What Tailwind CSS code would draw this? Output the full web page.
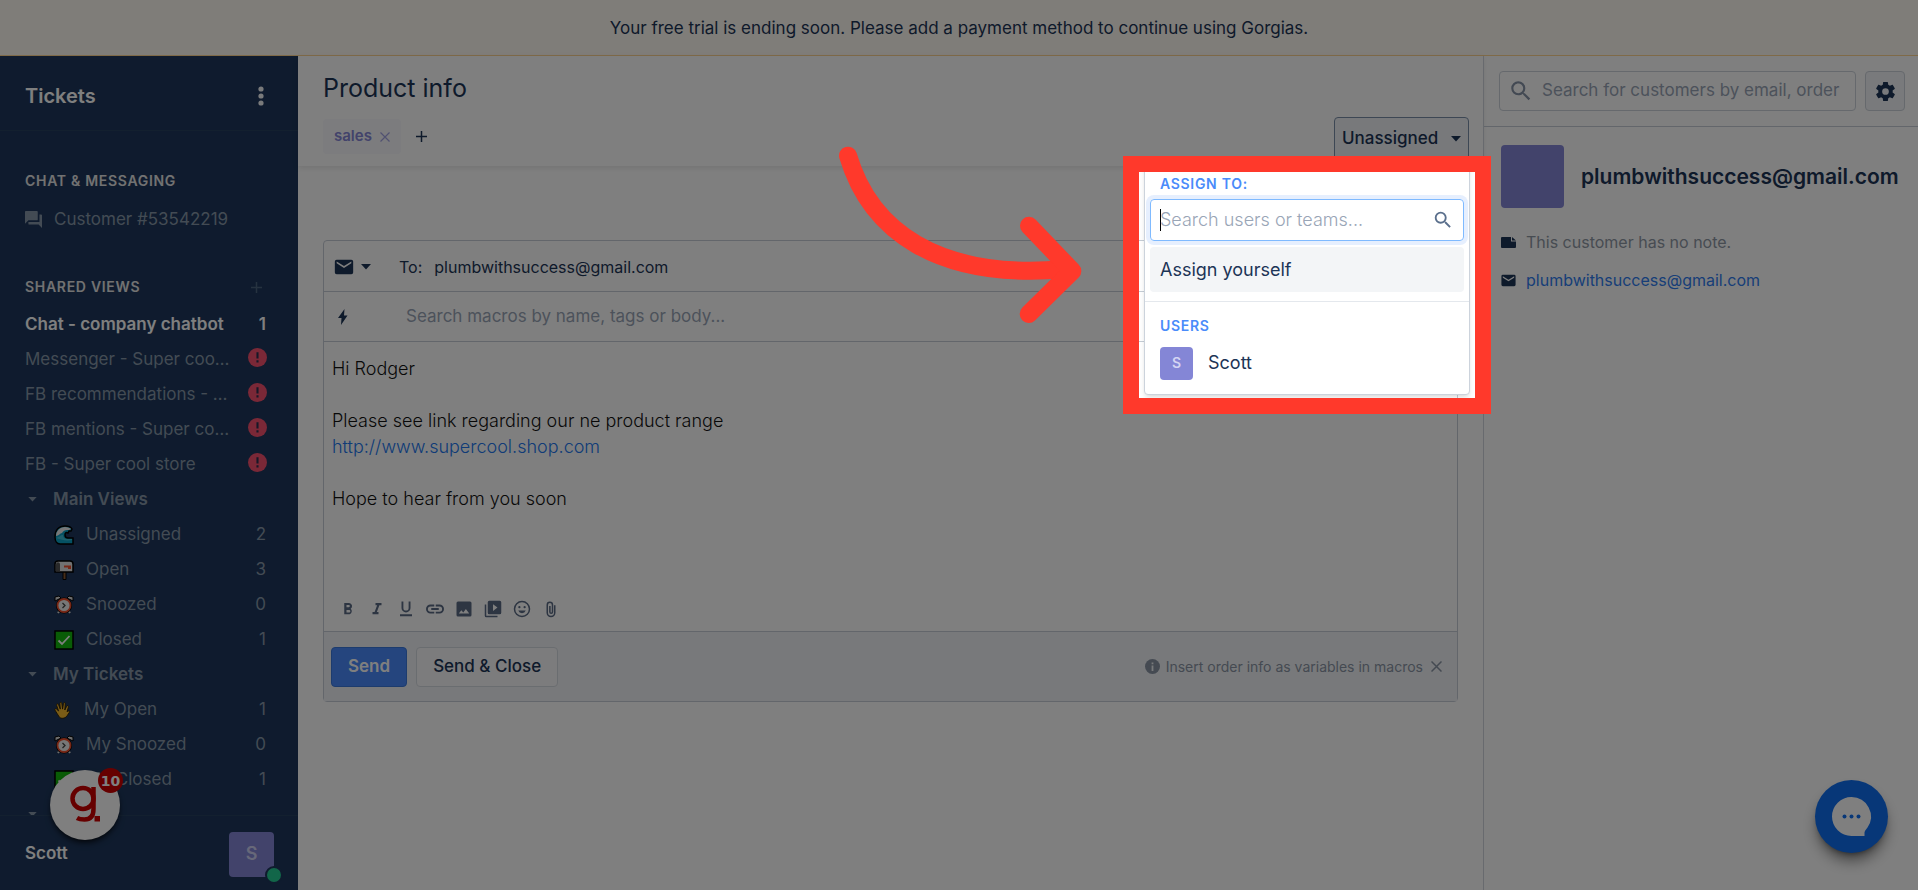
<!DOCTYPE html>
<html lang="en">
<head>
<meta charset="utf-8">
<title>Product info - Tickets</title>
<script src="https://cdn.jsdelivr.net/npm/@tailwindcss/browser@4"></script>
</head>
<body class="bg-white">
<svg class="hidden">
  <symbol id="mail" viewBox="0 0 24 24"><path d="M20 4H4a2 2 0 0 0-2 2v12a2 2 0 0 0 2 2h16a2 2 0 0 0 2-2V6a2 2 0 0 0-2-2zm0 4-8 5-8-5V6l8 5 8-5z"/></symbol>
  <symbol id="search" viewBox="0 0 24 24"><path d="M15.5 14h-.79l-.28-.27A6.47 6.47 0 0 0 16 9.5 6.5 6.5 0 1 0 9.5 16c1.61 0 3.09-.59 4.23-1.57l.27.28v.79l5 4.99L20.49 19zm-6 0C7.01 14 5 11.99 5 9.5S7.01 5 9.5 5 14 7.01 14 9.5 11.99 14 9.5 14z"/></symbol>
  <symbol id="caret" viewBox="0 0 10 6"><path d="M0 0h10L5 5.5z"/></symbol>
  <symbol id="alert" viewBox="0 0 20 20"><circle cx="10" cy="10" r="10" fill="#f4506e"/><path d="M8.9 4.5h2.2v6.500H8.900zM8.900 13h2.200v2.200H8.900z" fill="#2b3050"/></symbol>
  <symbol id="wave" viewBox="0 0 20 20"><path d="M1 12C1 5 5 1 11 1c3 0 6 1 7 3l-1 2-2 0-1 2c-2-1-3 0-3 2s1 3 3 3h5v6H6c-3 0-5-3-5-7z" fill="#0aa3c7" stroke="#000" stroke-width="1.5"/><path d="M2 11C2 6 6 2 11 2c3 0 5 1 6 2l-2 1-2 0c-2 0-4 1-5 3-2 0-3 3-6 3z" fill="#eee"/><path d="M2 13c4-1 4-3 7-3 0 2 1 4 4 4h5v1c-6 1-10 0-16-2z" fill="#3dc0d8"/></symbol>
  <symbol id="mailbox" viewBox="0 0 20 20"><path d="M9 11h3v8.500H9z" fill="#8d5a32" stroke="#000"/><path d="M4 1h12c2 0 3 1 3 3v8H1V4c0-2 1-3 3-3z" fill="#e4e4e4" stroke="#000" stroke-width="1.500"/><path d="M2 11.500V4.500c0-3 4-3 4 0v7z" fill="#555"/><path d="M10 5.500h7v3.500h-3V7.500h-4z" fill="#f0502e"/></symbol>
  <symbol id="clock" viewBox="0 0 20 20"><path d="M4 18l2-3M16 18l-2-3" stroke="#ddd" stroke-width="2"/><path d="M1 6V2l4-1 2 2zM19 6V2l-4-1-2 2z" fill="#ddd" stroke="#000"/><circle cx="10" cy="10.500" r="8" fill="#000"/><circle cx="10" cy="10.500" r="6.500" fill="#eee" stroke="#f0502e" stroke-width="1.800"/><path d="M8.500 8l2.500 2.500-2.500 2.500" fill="none" stroke="#444" stroke-width="1.300"/></symbol>
  <symbol id="check" viewBox="0 0 20 20"><path d="M1 1h18v18H1z" fill="#13b80c" stroke="#000" stroke-width="1.500"/><path d="M4.500 10.500 8 14l7.500-8" fill="none" stroke="#fff" stroke-width="1.800"/></symbol>
  <symbol id="hand" viewBox="0 0 20 20"><path d="M6 18C4 15 3 13 1 10c-.5-1.500 1-2 2-1l2 2L3 5c-.5-2 1.500-2.500 2-1l2 5-.5-6c0-2 2-2 2.300 0L9.500 9l1-6c.5-2 2.300-1.500 2 .3L12 10l2-4c.8-1.500 2.500-.8 2 .8L14.500 12c1-1 3-1.500 3 0l-3 4.500C12.500 19.500 8 20 6 18z" fill="#f4b82e" stroke="#2b1d00"/></symbol>
</svg>

<div class="flex h-screen flex-col overflow-hidden font-['Inter',sans-serif] text-[#1c3456]">
  <header class="flex h-14 shrink-0 items-center justify-center border-b border-[#ffd591] bg-[#fffaf2] pt-0.5 text-[17px]">Your free trial is ending soon. Please add a payment method to continue using Gorgias.</header>

  <div class="flex min-h-0 flex-1">
    <aside class="relative flex w-[298px] shrink-0 flex-col bg-[#1e375c]">
      <div class="flex h-[75px] shrink-0 items-center justify-between border-b border-[#26405f] pt-[6px] pr-[34px] pl-[25px]">
        <h1 class="text-xl font-semibold text-white">Tickets</h1>
        <button aria-label="More"><svg class="h-5 w-[6px]" viewBox="0 0 6 20" fill="#f2f4f6"><circle cx="3" cy="3" r="2.600"/><circle cx="3" cy="10" r="2.600"/><circle cx="3" cy="17" r="2.600"/></svg></button>
      </div>
      <nav class="min-h-0 flex-1 overflow-hidden pr-8 pl-[25px] text-[17px] text-[#8797a8]">
        <h2 class="mt-[35px] flex h-[30px] items-center text-sm font-semibold tracking-wider text-[#e4e4e4]">CHAT &amp; MESSAGING</h2>
        <a href="#" class="mt-[6px] flex h-[35px] items-center gap-3"><svg class="size-[17px]" viewBox="2 2 20 20" fill="currentColor"><path d="M21 6h-2v9H6v2a1 1 0 0 0 1 1h11l4 4V7a1 1 0 0 0-1-1zm-4 6V3a1 1 0 0 0-1-1H3a1 1 0 0 0-1 1v14l4-4h10a1 1 0 0 0 1-1z"/></svg>Customer #53542219</a>
        <div class="mt-[35px] flex h-[30px] items-center justify-between pr-1"><h2 class="text-sm font-semibold tracking-wider text-[#e4e4e4]">SHARED VIEWS</h2><button aria-label="Add view"><svg class="size-[11px]" viewBox="0 0 11 11"><path d="M5.500 0v11M0 5.500h11" stroke="#4d6480" stroke-width="1.500"/></svg></button></div>
        <a href="#" class="mt-[5px] flex h-[35px] items-center justify-between font-semibold text-white"><span>Chat - company chatbot</span><span>1</span></a>
        <a href="#" class="flex h-[35px] items-center justify-between"><span class="w-[206px] truncate">Messenger - Super cool store</span><svg class="-mr-px mb-1 size-[19px]"><use href="#alert"/></svg></a>
        <a href="#" class="flex h-[35px] items-center justify-between"><span class="w-[206px] truncate">FB recommendations - Super cool store</span><svg class="-mr-px mb-1 size-[19px]"><use href="#alert"/></svg></a>
        <a href="#" class="flex h-[35px] items-center justify-between"><span class="w-[206px] truncate">FB mentions - Super cool store</span><svg class="-mr-px mb-1 size-[19px]"><use href="#alert"/></svg></a>
        <a href="#" class="flex h-[35px] items-center justify-between"><span class="w-[206px] truncate">FB - Super cool store</span><svg class="-mr-px mb-1 size-[19px]"><use href="#alert"/></svg></a>
        <button class="flex h-[35px] w-full items-center gap-4 pl-[3px] font-semibold"><svg class="h-[5px] w-[9px]" fill="currentColor"><use href="#caret"/></svg>Main Views</button>
        <a href="#" class="flex h-[35px] items-center pl-[29px]"><svg class="mr-3 size-5"><use href="#wave"/></svg>Unassigned<span class="ml-auto">2</span></a>
        <a href="#" class="flex h-[35px] items-center pl-[29px]"><svg class="mr-3 size-5"><use href="#mailbox"/></svg>Open<span class="ml-auto">3</span></a>
        <a href="#" class="flex h-[35px] items-center pl-[29px]"><svg class="mr-3 size-5"><use href="#clock"/></svg>Snoozed<span class="ml-auto">0</span></a>
        <a href="#" class="flex h-[35px] items-center pl-[29px]"><svg class="mr-3 size-5"><use href="#check"/></svg>Closed<span class="ml-auto">1</span></a>
        <button class="flex h-[35px] w-full items-center gap-4 pl-[3px] font-semibold"><svg class="h-[5px] w-[9px]" fill="currentColor"><use href="#caret"/></svg>My Tickets</button>
        <a href="#" class="flex h-[35px] items-center pl-[29px]"><svg class="mr-3 size-[18px]"><use href="#hand"/></svg>My Open<span class="ml-auto">1</span></a>
        <a href="#" class="flex h-[35px] items-center pl-[29px]"><svg class="mr-3 size-5"><use href="#clock"/></svg>My Snoozed<span class="ml-auto">0</span></a>
        <a href="#" class="flex h-[35px] items-center pl-[29px]"><svg class="mr-3 size-5"><use href="#check"/></svg>My Closed<span class="ml-auto">1</span></a>
        <button aria-label="Expand section" class="flex h-[35px] w-full items-center pl-[3px]"><svg class="h-[5px] w-[9px]" fill="currentColor"><use href="#caret"/></svg></button>
      </nav>
      <div class="flex h-[75px] shrink-0 items-center justify-between border-t border-[#26405f] pt-0.5 pr-6 pl-[25px]">
        <span class="text-[17px] font-semibold text-white">Scott</span>
        <div class="relative flex size-[45px] items-center justify-center rounded-sm bg-[#8486d6] text-lg font-semibold text-[#cfd0f2]">S<span class="absolute -right-[9px] -bottom-[7px] size-[18px] rounded-full border-2 border-[#1e375c] bg-[#24cc92]"></span></div>
      </div>
      <button aria-label="Guide, 10 new" class="absolute bottom-[50px] left-[50px] size-[70px] rounded-full bg-white shadow-md shadow-black/60">
        <svg class="size-[70px]" viewBox="0 0 70 70" fill="none" stroke="#cc0000" stroke-width="4.500"><circle cx="33" cy="28.500" r="10.500"/><path d="M43.500 17v22c0 7-3 10.500-9 10.500-3 0-5 0-7.500-1.500"/><path d="M44.500 46h5.500v5.500h-5.500z" fill="#cc0000" stroke="none"/></svg>
        <span class="absolute -top-[2px] -right-[3px] flex size-[25px] items-center justify-center rounded-full bg-[#cc0000] font-['DejaVu_Sans',sans-serif] text-sm font-bold text-white">10</span>
      </button>
    </aside>

    <main class="relative min-w-0 flex-1">
      <div class="flex h-[110px] items-start justify-between pr-[14px] pl-[25px] shadow-[0_2px_6px_rgba(0,0,0,0.10)]">
        <div>
          <h2 class="mt-4 text-[25px] leading-8">Product info</h2>
          <div class="mt-[15px] flex items-center gap-[15px]">
            <span class="flex h-[35px] items-center gap-2 rounded bg-[#f8f8fd] px-[11px] text-[15px] font-semibold text-[#8486d6]">sales<button aria-label="Remove tag"><svg class="size-[10px]" viewBox="0 0 10 10"><path d="m.5.500 9 9m0-9-9 9" stroke="#a3a4e2" stroke-width="1.200"/></svg></button></span>
            <button aria-label="Add tag"><svg class="size-[11px]" viewBox="0 0 11 11"><path d="M5.500 0v11M0 5.500h11" stroke="#1c3456" stroke-width="1.500"/></svg></button>
          </div>
        </div>
        <button aria-haspopup="true" class="mt-[61px] flex h-[43px] w-[135px] items-center justify-between rounded border border-[#7b8fa9] bg-[#f0f3f7] px-[7px] text-[17px] font-medium">Unassigned<svg class="h-[6px] w-[10px]" fill="currentColor"><use href="#caret"/></svg></button>
      </div>

      <form class="mt-[74px] mr-[25px] ml-[25px] rounded-sm border border-[#c6cdd6] bg-white">
        <div class="flex h-[51px] items-center border-b border-[#c6cdd6] pt-0.5 pl-[9px]">
          <button type="button" aria-label="Channel" class="flex w-[66px] items-center gap-[6px]"><svg class="size-[22px]" fill="currentColor"><use href="#mail"/></svg><svg class="h-[6px] w-[10px]" fill="currentColor"><use href="#caret"/></svg></button>
          <span class="mr-3 text-base">To:</span><span class="text-base">plumbwithsuccess@gmail.com</span>
        </div>
        <div class="flex h-[50px] items-center border-b border-[#c6cdd6] pl-[14px]">
          <svg class="h-4 w-[10px]" viewBox="0 0 10 16" fill="currentColor"><path d="M6.500 0 0 9h3.500L3 16l6.500-9.500H6z"/></svg>
          <input aria-label="Search macros" class="ml-[58px] min-w-0 flex-1 bg-transparent text-[17px] outline-none placeholder:text-[#99a5b6]" placeholder="Search macros by name, tags or body...">
        </div>
        <div class="h-[245px] px-2 pt-[14px] text-lg leading-[26px] font-light text-[#111]">
          <p>Hi Rodger</p><br>
          <p>Please see link regarding our ne product range</p>
          <p><a href="#" class="text-[#2277ee]">http://www.supercool.shop.com</a></p><br>
          <p>Hope to hear from you soon</p>
        </div>
        <div class="flex h-11 items-start gap-[11px] pt-[13px] pl-[15px] text-[#5a6a84]">
          <button type="button" aria-label="Bold"><svg class="size-[18px]" viewBox="0 0 24 24" fill="currentColor"><path d="M15.600 11.800A4.300 4.300 0 0 0 13.500 4H7v15h7.300a4.300 4.300 0 0 0 1.300-7.200zM10 6.500h3a1.500 1.500 0 0 1 0 3h-3zm3.500 10H10v-3.300h3.500a1.600 1.600 0 0 1 0 3.300z"/></svg></button>
          <button type="button" aria-label="Italic"><svg class="size-[18px]" viewBox="0 0 24 24" fill="currentColor"><path d="M10 4v3h2.200l-3.400 9H6v3h8v-3h-2.200l3.400-9H18V4z"/></svg></button>
          <button type="button" aria-label="Underline"><svg class="size-[18px]" viewBox="0 0 24 24" fill="currentColor"><path d="M12 16.500a6 6 0 0 0 6-6V2h-2.500v8.500a3.500 3.500 0 0 1-7 0V2H6v8.500a6 6 0 0 0 6 6zM4 19v2.500h16V19z"/></svg></button>
          <button type="button" aria-label="Link"><svg class="size-[18px]" viewBox="0 0 24 24" fill="currentColor"><path d="M2.500 12A3.500 3.500 0 0 1 6 8.500h5V6H6a6 6 0 0 0 0 12h5v-2.500H6A3.500 3.500 0 0 1 2.500 12zM7 13.300h10v-2.600H7zM18 6h-5v2.500h5a3.500 3.500 0 0 1 0 7h-5V18h5a6 6 0 0 0 0-12z"/></svg></button>
          <button type="button" aria-label="Image"><svg class="size-[18px]" viewBox="0 0 24 24" fill="currentColor"><path d="M22 20V4a2 2 0 0 0-2-2H4a2 2 0 0 0-2 2v16a2 2 0 0 0 2 2h16a2 2 0 0 0 2-2zM8.500 13.500l2.500 3 3.500-4.500 4.500 6H5z"/></svg></button>
          <button type="button" aria-label="Video"><svg class="size-[18px]" viewBox="0 0 24 24" fill="currentColor"><path d="M3 6H1v15a2 2 0 0 0 2 2h15v-2H3zm18-5H7a2 2 0 0 0-2 2v14a2 2 0 0 0 2 2h14a2 2 0 0 0 2-2V3a2 2 0 0 0-2-2zm-9 13.500v-9l6 4.500z"/></svg></button>
          <button type="button" aria-label="Emoji"><svg class="size-[18px]" viewBox="0 0 24 24" fill="currentColor"><path d="M12 1a11 11 0 1 0 0 22 11 11 0 0 0 0-22zm0 20a9 9 0 1 1 0-18 9 9 0 0 1 0 18zm3.500-10a1.500 1.500 0 1 0 0-3 1.500 1.500 0 0 0 0 3zm-7 0a1.500 1.500 0 1 0 0-3 1.500 1.500 0 0 0 0 3zM12 17.500a5.500 5.500 0 0 0 5-3.500H7a5.500 5.500 0 0 0 5 3.500z"/></svg></button>
          <button type="button" aria-label="Attach"><svg class="size-[18px]" viewBox="0 0 24 24" fill="none" stroke="currentColor" stroke-width="2"><path d="M17 7v10a5 5 0 0 1-10 0V6.500a3.500 3.500 0 0 1 7 0V16a1.500 1.500 0 0 1-3.500 0V8"/></svg></button>
        </div>
        <div class="flex h-[70px] items-center border-t border-[#c6cdd6] bg-[#f1f3f6] px-[7px]">
          <button type="button" class="h-10 rounded border border-[#3b78dc] bg-[#4a8afc] px-4 text-[17px] font-semibold text-white">Send</button>
          <button type="button" class="ml-[9px] h-10 rounded border border-[#d5dae1] bg-[#f8f9fb] px-4 text-[17px] font-medium">Send &amp; Close</button>
          <div class="ml-auto flex items-center pr-2 text-sm text-[#8a95a5]">
            <svg class="mr-[6px] size-[15px]" viewBox="0 0 15 15"><circle cx="7.500" cy="7.500" r="7.500" fill="currentColor"/><path d="M6.600 3.500h1.800v1.800H6.600zM6.600 6.500h1.800V12H6.600z" fill="#f1f3f6"/></svg>
            Insert order info as variables in macros
            <button type="button" aria-label="Dismiss" class="ml-2"><svg class="size-[11px]" viewBox="0 0 11 11"><path d="m.5.500 10 10m0-10-10 10" stroke="currentColor" stroke-width="1.500"/></svg></button>
          </div>
        </div>
      </form>

      <div class="absolute top-[106px] right-[13px] w-[326px] rounded border border-[#ccd3dc] bg-white px-[5px] pt-[10px] shadow-md">
        <p class="flex h-[22px] items-center px-[10px] text-sm font-semibold tracking-wider text-[#4a8bfa]">ASSIGN TO:</p>
        <div class="mt-[4px] flex h-[42px] items-center rounded border border-[#7fbaff] px-[9px] ring-4 ring-[#e6effe]">
          <span class="-mr-px h-[22px] w-px bg-black"></span>
          <input aria-label="Search users or teams" class="min-w-0 flex-1 text-lg font-light outline-none placeholder:text-[#99a5b6]" placeholder="Search users or teams...">
          <svg class="size-[22px]" fill="#5a6f8c"><use href="#search"/></svg>
        </div>
        <button class="mt-[6px] flex h-[45px] w-full items-center rounded bg-[#f3f5f7] px-[10px] text-lg">Assign yourself</button>
        <hr class="-mx-[5px] mt-[9px] border-[#e4e8ed]">
        <p class="mt-[13px] flex h-[22px] items-center px-[10px] text-sm font-semibold tracking-wider text-[#4a8bfa]">USERS</p>
        <button class="flex h-[52px] w-full items-center px-[10px] text-lg"><span class="mr-[15px] flex size-[33px] items-center justify-center rounded-sm bg-[#8486d6] text-sm font-semibold text-[#d4d5f3]">S</span>Scott</button>
        <div class="h-[5px]"></div>
      </div>

      <!-- Tour spotlight: everything outside the frame is dimmed -->
      <div class="pointer-events-none absolute top-[100px] -right-2 z-50 h-[258px] w-[368px] border-16 border-[#ff392b] shadow-[0_0_0_2400px_rgba(0,0,0,0.5)]"></div>
      <svg class="pointer-events-none absolute top-[74px] right-[383px] z-50 h-[210px] w-[270px]" viewBox="0 0 810 630" fill="none" stroke="#ff392b" stroke-width="54" stroke-linecap="round" stroke-linejoin="round"><path d="M54 77C120 300 320 450 700 418"/><path d="M597 287 727 423 596 552"/></svg>
    </main>

    <aside class="relative w-[435px] shrink-0 border-l border-[#d0d5dc]">
      <div class="flex h-[71px] items-center gap-[9px] border-b border-[#c6cdd6] pr-[13px] pl-[15px]">
        <label class="flex h-10 min-w-0 flex-1 items-center rounded border border-[#ccd2da] px-2"><svg class="mr-2 size-[26px]" fill="#8693a6"><use href="#search"/></svg><input aria-label="Search customers" class="min-w-0 flex-1 text-[17px] outline-none placeholder:text-[#99a5b6]" placeholder="Search for customers by email, order"></label>
        <button aria-label="Settings" class="flex size-10 items-center justify-center rounded border border-[#ccd2da] bg-[#f3f5f8]"><svg class="size-[23px]" viewBox="0 0 24 24" fill="currentColor"><path d="M19.430 12.980c.04-.32.070-.64.070-.98s-.03-.66-.07-.98l2.110-1.650c.19-.15.240-.42.120-.64l-2-3.460c-.12-.22-.39-.3-.61-.22l-2.490 1c-.52-.4-1.080-.73-1.690-.98l-.38-2.650A.49.490 0 0 0 14 2h-4c-.25 0-.46.180-.49.420l-.38 2.650c-.61.250-1.170.590-1.690.980l-2.490-1c-.23-.09-.49 0-.61.220l-2 3.460c-.13.220-.07.490.120.640l2.110 1.650c-.04.320-.07.650-.07.980s.03.660.070.980l-2.110 1.650c-.19.150-.24.420-.12.640l2 3.460c.12.220.390.300.610.220l2.490-1c.52.400 1.080.730 1.690.980l.38 2.650c.03.240.240.420.490.420h4c.25 0 .46-.18.490-.42l.38-2.650c.61-.25 1.170-.59 1.690-.98l2.490 1c.23.090.490 0 .61-.22l2-3.460c.12-.22.070-.49-.12-.64zM12 15.500A3.500 3.500 0 1 1 12 8.500a3.500 3.500 0 0 1 0 7z"/></svg></button>
      </div>
      <div class="px-[17px] pt-[18px]">
        <div class="flex items-center gap-[17px]"><span class="size-[63px] shrink-0 rounded bg-[#8486d6]"></span><h3 class="text-[21px] font-semibold">plumbwithsuccess@gmail.com</h3></div>
        <p class="mt-[22px] flex h-6 items-center gap-[10px] text-base text-[#8f98a5]"><svg class="h-[11px] w-[15px]" viewBox="0 0 15 11" fill="#1c3456"><path d="M1 0h9v4.500h5V10a1 1 0 0 1-1 1H1a1 1 0 0 1-1-1V1a1 1 0 0 1 1-1zm10 0 4 3.500h-4z"/></svg>This customer has no note.</p>
        <a href="#" class="mt-[14px] flex h-6 items-center gap-[9px] text-base text-[#2f7df0]"><svg class="-ml-px size-[17px]" fill="#1c3456"><use href="#mail"/></svg>plumbwithsuccess@gmail.com</a>
      </div>
      <button aria-label="Open chat" class="absolute right-[30px] bottom-[37px] size-[73px] rounded-full bg-[#0f6ef0] shadow-lg shadow-black/50">
        <svg class="size-[73px]" viewBox="0 0 73 73"><path d="M36.500 17a19.500 19.500 0 0 1 16 30.500q-3 3.500-3 5V56H36.500a19.500 19.500 0 0 1 0-39z" fill="#fff"/><g fill="#0f6ef0"><circle cx="29.500" cy="36.500" r="2"/><circle cx="36.500" cy="36.500" r="2"/><circle cx="43.500" cy="36.500" r="2"/></g></svg>
      </button>
    </aside>
  </div>
</div>
</body>
</html>
